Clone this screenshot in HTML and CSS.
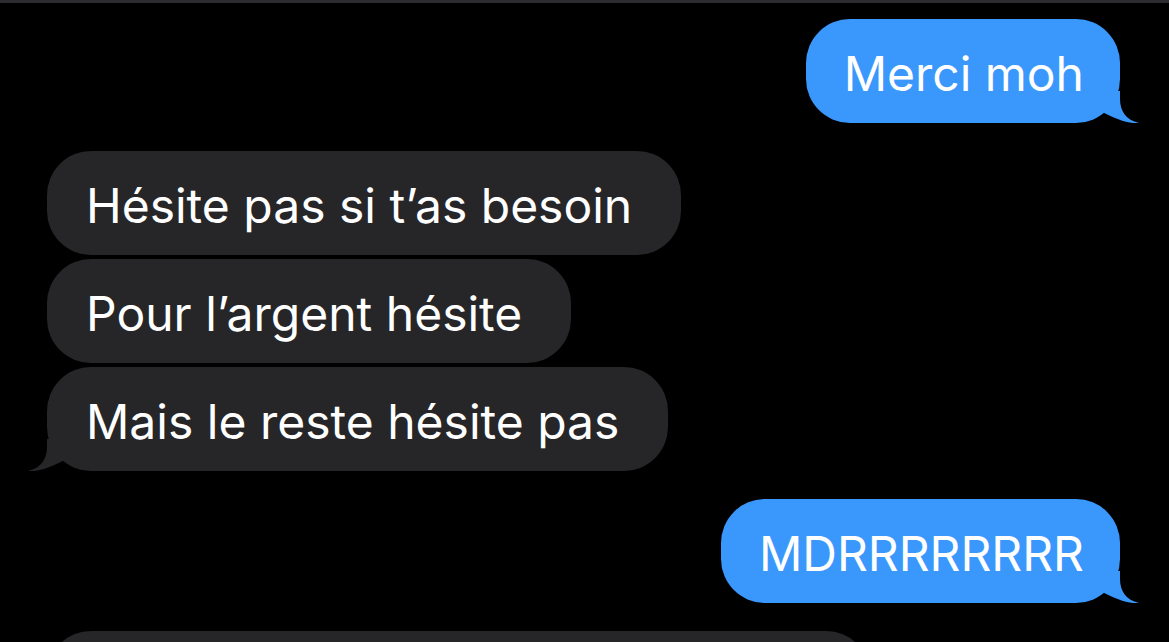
FILE: index.html
```html
<!DOCTYPE html>
<html>
  <head>
    <meta charset="utf-8">
    <title>Messages</title>
    <link rel="stylesheet" href="styles.css">
  </head>
  <body>
    <div class="topbar"></div>
    <div id="thread">
      <div class="row sent">
        <div class="bubble">Merci moh
          <svg class="tail" viewBox="0 0 42 32"><path d="M4,0 L22,0 L22,8 C22,20 28,29 41,32 C30,33 18,28 4,21 Z"/></svg>
        </div>
      </div>
      <div class="group">
        <div class="row received">
          <div class="bubble">Hésite pas si t’as besoin</div>
        </div>
        <div class="row received">
          <div class="bubble">Pour l’argent hésite</div>
        </div>
        <div class="row received">
          <div class="bubble">Mais le reste hésite pas
            <svg class="tail" viewBox="0 0 42 32"><path d="M4,0 L22,0 L22,8 C22,20 28,29 41,32 C30,33 18,28 4,21 Z"/></svg>
          </div>
        </div>
      </div>
      <div class="row sent">
        <div class="bubble">MDRRRRRRRR
          <svg class="tail" viewBox="0 0 42 32"><path d="M4,0 L22,0 L22,8 C22,20 28,29 41,32 C30,33 18,28 4,21 Z"/></svg>
        </div>
      </div>
      <div class="row received">
        <div class="bubble wide">&nbsp;</div>
      </div>
    </div>
  </body>
</html>
```

FILE: styles.css
```css
*, *::before, *::after {
  padding: 0;
  margin: 0;
  border: 0;
  box-sizing: border-box;
}

html, body {background: #000; height: 100%; overflow: hidden;}
body {font-family: Inter, "Liberation Sans", sans-serif; color: #fff;}

.topbar {height: 3px; background: #2c2c2e;}

#thread {display: flex; flex-direction: column; gap: 28px; padding: 16px 49px 0 47px;}
.group {display: flex; flex-direction: column; gap: 4px;}

.row {display: flex;}
.row.sent {justify-content: flex-end;}
.row.received {justify-content: flex-start;}

.bubble {
  position: relative;
  height: 104px;
  padding: 26px 36px 20px 38px;
  border-radius: 44px;
  font-size: 48px;
  line-height: 58px;
  white-space: nowrap;
}
.sent .bubble {background: #3a98fd;}
.received .bubble {background: #262629; padding: 26px 49px 20px 39px;}
.received .bubble.wide {width: 823px;}

/* little curled tail at the bottom corner */
.tail {position: absolute; bottom: 0; width: 42px; height: 32px;}
.sent .tail {right: -20px; fill: #3a98fd;}
.received .tail {left: -20px; fill: #262629; transform: scaleX(-1);}
```
